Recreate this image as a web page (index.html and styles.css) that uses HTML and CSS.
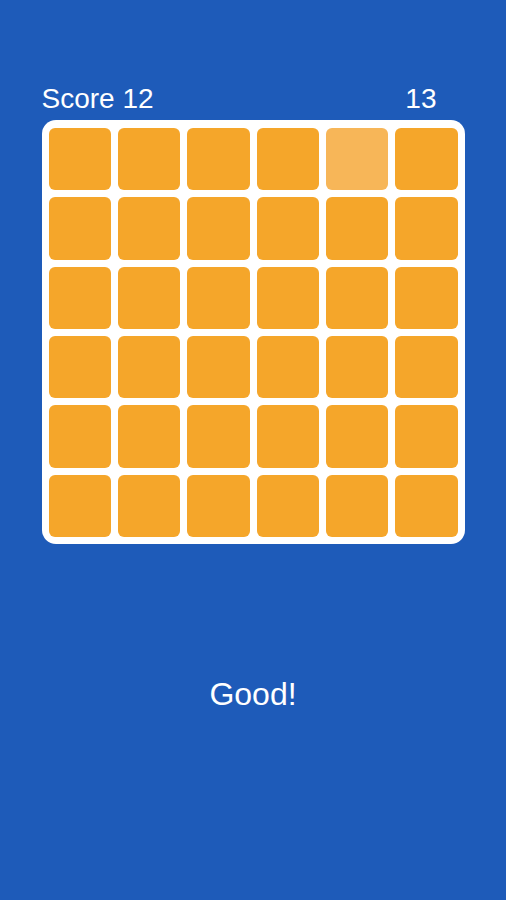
FILE: index.html
```html
<!DOCTYPE html>
<html lang="en">
<head>
    <meta charset="UTF-8">
    <meta name="viewport" content="width=device-width, initial-scale=1.0">
    <title>Color Grid</title>
    <link rel="stylesheet" href="styles.css">
</head>
<body>
    <div class="game">
        <div class="status">
            <span class="score">Score 12</span>
            <span class="timer">13</span>
        </div>

        <div class="board" id="board"></div>

        <p class="message">Good!</p>
    </div>

<script>
const SIZE = 6;
const odd = { row: 0, col: 4 };

// Build the board tiles
const board = document.getElementById('board');
const tiles = [];
for (let r = 0; r < SIZE; r++) {
    for (let c = 0; c < SIZE; c++) {
        const isOdd = r === odd.row && c === odd.col;
        tiles.push(`<div class="tile${isOdd ? ' tile-odd' : ''}"></div>`);
    }
}
board.innerHTML = tiles.join('');
</script>
</body>
</html>
```

FILE: styles.css
```css
:root {
    --blue: #1e5bb9;
    --tile: #f5a62a;
    --tile-odd: #f7b658;
}

body {
    margin: 0;
    background: var(--blue);
    font-family: 'Liberation Sans', Arial, sans-serif;
    color: #fff;
}

.game {
    width: 423px;
    margin: 0 auto;
    padding-top: 83px;
}

.status {
    display: flex;
    justify-content: space-between;
    padding: 0 28px 0 0;
    font-size: 28px;
    line-height: 32px;
    margin-bottom: 5px;
}

.board {
    display: grid;
    grid-template-columns: repeat(6, 1fr);
    gap: 7px;
    padding: 8px 7px 7px;
    background: #fff;
    border-radius: 14px;
}

.tile {
    aspect-ratio: 1;
    background: var(--tile);
    border-radius: 6px;
}

.tile-odd {
    background: var(--tile-odd);
}

.message {
    margin: 132px 0 0;
    text-align: center;
    font-size: 32px;
}
```
